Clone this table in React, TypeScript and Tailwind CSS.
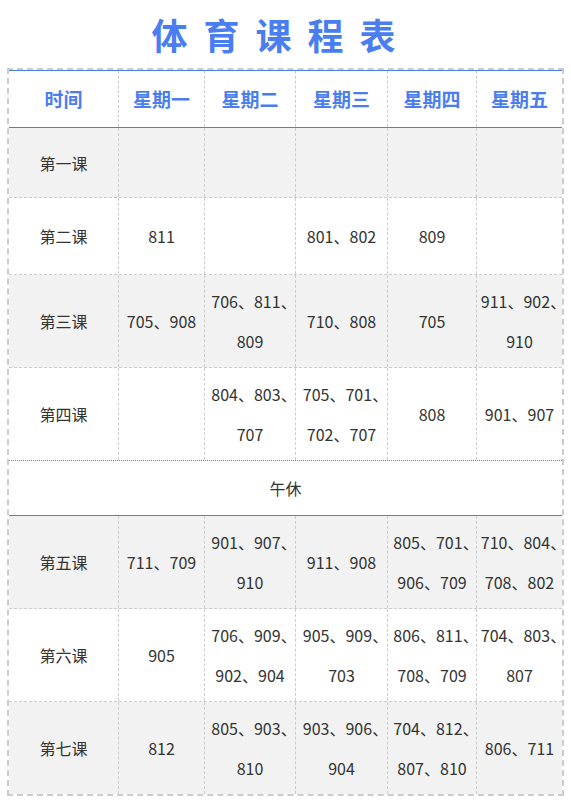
const days = ["星期一", "星期二", "星期三", "星期四", "星期五"];

type Row = { name: string; cells: string[][]; h: string; gray: boolean };

const morning: Row[] = [
  { name: "第一课", cells: [[], [], [], [], []], h: "h-[70px]", gray: true },
  { name: "第二课", cells: [["811"], [], ["801、802"], ["809"], []], h: "h-[77px]", gray: false },
  {
    name: "第三课",
    cells: [["705、908"], ["706、811、", "809"], ["710、808"], ["705"], ["911、902、", "910"]],
    h: "h-[93px]",
    gray: true,
  },
  {
    name: "第四课",
    cells: [[], ["804、803、", "707"], ["705、701、", "702、707"], ["808"], ["901、907"]],
    h: "h-[92px]",
    gray: false,
  },
];

const afternoon: Row[] = [
  {
    name: "第五课",
    cells: [["711、709"], ["901、907、", "910"], ["911、908"], ["805、701、", "906、709"], ["710、804、", "708、802"]],
    h: "h-[93px]",
    gray: true,
  },
  {
    name: "第六课",
    cells: [["905"], ["706、909、", "902、904"], ["905、909、", "703"], ["806、811、", "708、709"], ["704、803、", "807"]],
    h: "h-[93px]",
    gray: false,
  },
  {
    name: "第七课",
    cells: [["812"], ["805、903、", "810"], ["903、906、", "904"], ["704、812、", "807、810"], ["806、711"]],
    h: "h-[92px]",
    gray: true,
  },
];

const cols = "grid grid-cols-[110px_86px_91px_92px_89px_85px]";

// trailing 、 hangs a little past the line, like the original wrap
function Line({ text }: { text: string }) {
  if (text.endsWith("、")) {
    return (
      <span className="whitespace-nowrap">
        {text.slice(0, -1)}
        <span className="mr-[-8px]">、</span>
      </span>
    );
  }
  return <span className="whitespace-nowrap">{text}</span>;
}

function Cell({ lines, last }: { lines: string[]; last?: boolean }) {
  return (
    <div
      className={
        "flex flex-col items-center justify-center text-center leading-[40px] border-dashed border-[#ccc] " +
        (last ? "" : "border-r")
      }
    >
      {lines.map((l, i) => (
        <Line key={i} text={l} />
      ))}
    </div>
  );
}

function LessonRow({ row, border }: { row: Row; border: boolean }) {
  return (
    <div
      className={
        cols +
        " box-border border-dashed border-[#ccc] " +
        row.h +
        (border ? " border-b" : "") +
        (row.gray ? " bg-[#f2f2f2]" : " bg-white")
      }
    >
      <Cell lines={[row.name]} />
      {row.cells.map((c, i) => (
        <Cell key={i} lines={c} last={i === 4} />
      ))}
    </div>
  );
}

export default function App() {
  return (
    <div className="w-[571px] min-h-[803px] bg-white font-['Noto_Sans_CJK_SC',sans-serif] text-[16px] text-[#333]">
      <div className="h-[68px] flex items-center justify-center pr-[8px]">
        <h1 className="text-[36px] font-bold tracking-[16px] leading-none text-[#4a7ef0]">体育课程表</h1>
      </div>

      <div className="ml-[7px] w-[557px] box-border border-2 border-dashed border-[#ccc]">
        <div className={cols + " h-[58px] box-border border-y border-solid border-[#4a7ef0] bg-white"}>
          <div className="flex items-center justify-center border-r border-dashed border-[#ccc] text-[19px] font-bold text-[#4a7ef0]">
            时间
          </div>
          {days.map((d, i) => (
            <div
              key={d}
              className={
                "flex items-center justify-center border-dashed border-[#ccc] text-[19px] font-bold text-[#4a7ef0] " +
                (i === 4 ? "" : "border-r")
              }
            >
              {d}
            </div>
          ))}
        </div>

        {morning.map((r, i) => (
          <LessonRow key={r.name} row={r} border={i < 3} />
        ))}

        <div className="border-b border-solid border-[#4a7ef0]">
          <div className="h-[55px] box-border border-t border-dotted border-[#4a7ef0] flex items-center justify-center bg-white">
            午休
          </div>
        </div>

        {afternoon.map((r, i) => (
          <LessonRow key={r.name} row={r} border={i < 2} />
        ))}
      </div>
    </div>
  );
}
